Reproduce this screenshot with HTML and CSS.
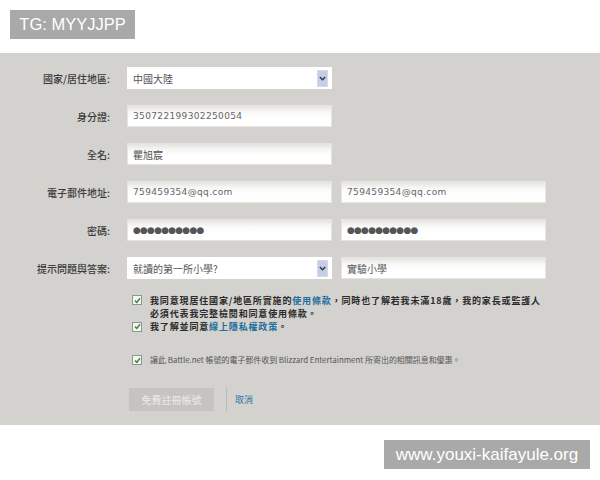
FILE: index.html
```html
<!DOCTYPE html>
<html lang="zh-Hant">
<head>
<meta charset="utf-8">
<title>註冊</title>
<link rel="stylesheet" href="styles.css">
</head>
<body>
<div class="tg">TG: MYYJJPP</div>
<div class="panel">
  <div class="form">
    <div class="row">
      <div class="label">國家/居住地區:</div>
      <div class="field select"><span class="val cjk">中國大陸</span><span class="arrow"><svg width="7" height="5" viewBox="0 0 7 5"><path d="M0.8 1 L3.5 3.8 L6.2 1" fill="none" stroke="#2b3550" stroke-width="1.4"/></svg></span></div>
    </div>
    <div class="row">
      <div class="label">身分證:</div>
      <div class="field"><span class="val">350722199302250054</span></div>
    </div>
    <div class="row">
      <div class="label">全名:</div>
      <div class="field"><span class="val cjk">瞿旭宸</span></div>
    </div>
    <div class="row">
      <div class="label">電子郵件地址:</div>
      <div class="field"><span class="val">759459354@qq.com</span></div>
      <div class="field"><span class="val">759459354@qq.com</span></div>
    </div>
    <div class="row">
      <div class="label">密碼:</div>
      <div class="field"><span class="dots">●●●●●●●●●●</span></div>
      <div class="field"><span class="dots">●●●●●●●●●●</span></div>
    </div>
    <div class="row">
      <div class="label">提示問題與答案:</div>
      <div class="field select"><span class="val cjk">就讀的第一所小學?</span><span class="arrow"><svg width="7" height="5" viewBox="0 0 7 5"><path d="M0.8 1 L3.5 3.8 L6.2 1" fill="none" stroke="#2b3550" stroke-width="1.4"/></svg></span></div>
      <div class="field"><span class="val cjk">實驗小學</span></div>
    </div>
  </div>
  <div class="checks">
    <div class="check">
      <span class="box"><svg width="7" height="7" viewBox="0 0 7 7"><path d="M1 3.6 L2.8 5.4 L6 1.2" fill="none" stroke="#3d8a3a" stroke-width="1.5"/></svg></span>
      <p class="ctext">我同意現居住國家/地區所實施的<a>使用條款</a>，同時也了解若我未滿18歲，我的家長或監護人<br>必須代表我完整檢閱和同意使用條款。</p>
    </div>
    <div class="check">
      <span class="box"><svg width="7" height="7" viewBox="0 0 7 7"><path d="M1 3.6 L2.8 5.4 L6 1.2" fill="none" stroke="#3d8a3a" stroke-width="1.5"/></svg></span>
      <p class="ctext">我了解並同意<a>線上隱私權政策</a>。</p>
    </div>
    <div class="check small">
      <span class="box"><svg width="7" height="7" viewBox="0 0 7 7"><path d="M1 3.6 L2.8 5.4 L6 1.2" fill="none" stroke="#3d8a3a" stroke-width="1.5"/></svg></span>
      <p class="stext">讓此 Battle.net 帳號的電子郵件收到 Blizzard Entertainment 所寄出的相關訊息和優惠。</p>
    </div>
  </div>
  <div class="actions">
    <div class="btn">免費註冊帳號</div>
    <div class="sep"></div>
    <a class="cancel">取消</a>
  </div>
</div>
<div class="foot"><div class="site">www.youxi-kaifayule.org</div></div>
</body>
</html>
```
FILE: styles.css
```css
* { box-sizing: border-box; }
body {
  margin: 0;
  background: #ffffff;
  font-family: "Noto Sans CJK TC", "Noto Sans", sans-serif;
}
.tg {
  margin: 10px 0 0 10px;
  width: 125px;
  height: 29px;
  background: #a9a9a9;
  color: #ffffff;
  font-family: "Liberation Sans", sans-serif;
  font-size: 16.5px;
  line-height: 29px;
  text-align: center;
}
.panel {
  margin-top: 14px;
  height: 372px;
  background: #d3d2ce;
  padding-top: 14px;
}
.form {
  display: flex;
  flex-direction: column;
  gap: 16px;
}
.row {
  display: flex;
  align-items: center;
  height: 22px;
}
.label {
  width: 110px;
  margin-right: 17px;
  text-align: right;
  font-size: 10px;
  color: #3a3a3a;
  font-weight: 500;
}
.field {
  position: relative;
  width: 205px;
  height: 22px;
  margin-right: 9px;
  background: linear-gradient(#e4e3e0 0px, #f7f7f6 6px, #ffffff 12px);
  border: 1px solid #e6e5e2;
  display: flex;
  align-items: center;
  padding-left: 5px;
}
.field.select {
  background: #ffffff;
  border-color: #ffffff;
}
.val {
  font-family: "DejaVu Sans", sans-serif;
  font-size: 9px;
  letter-spacing: 0.35px;
  color: #666666;
}
.val.cjk {
  font-family: "Noto Sans CJK TC", sans-serif;
  font-size: 10px;
  letter-spacing: 0;
  color: #555555;
}
.dots {
  font-family: "DejaVu Sans", sans-serif;
  font-size: 9px;
  letter-spacing: -0.8px;
  color: #555555;
}
.arrow {
  position: absolute;
  right: 3px;
  top: 2px;
  width: 11px;
  height: 17px;
  background: #c6cee6;
  border: 1px solid #d6dbec;
  display: flex;
  align-items: center;
  justify-content: center;
}
.checks {
  margin-top: 15px;
  padding-left: 132px;
  display: flex;
  flex-direction: column;
}
.check {
  display: flex;
  align-items: flex-start;
}
.check + .check { margin-top: 1px; }
.check.small { margin-top: 21px; }
.box {
  width: 10px;
  height: 10px;
  margin-top: 1px;
  margin-right: 8px;
  background: #f4f4f2;
  border: 1px solid #8a9a8a;
  display: flex;
  align-items: center;
  justify-content: center;
  flex: none;
}
.ctext {
  margin: -0.5px 0 0 0;
  font-size: 9px;
  line-height: 13px;
  font-weight: 700;
  color: #2a2a2a;
  letter-spacing: 0.85px;
}
.ctext a { color: #1f6e9c; }
.stext {
  margin: 0;
  font-size: 8px;
  line-height: 12px;
  color: #555555;
  letter-spacing: -0.05px;
}
.actions {
  margin-top: 21px;
  padding-left: 129px;
  display: flex;
  align-items: center;
}
.btn {
  width: 85px;
  height: 23px;
  background: #c5c4c0;
  color: #ecebe8;
  font-size: 10px;
  line-height: 23px;
  text-align: center;
}
.sep {
  width: 1px;
  height: 25px;
  background: #bdbcb8;
  margin-left: 12px;
  margin-right: 8px;
}
.cancel {
  font-size: 9px;
  color: #2a78a8;
}
.foot {
  display: flex;
  justify-content: flex-end;
  padding: 15px 10px 0 0;
}
.site {
  width: 206px;
  height: 29px;
  background: #a9a9a9;
  color: #ffffff;
  font-family: "Liberation Sans", sans-serif;
  font-size: 17px;
  line-height: 29px;
  text-align: center;
}
```
